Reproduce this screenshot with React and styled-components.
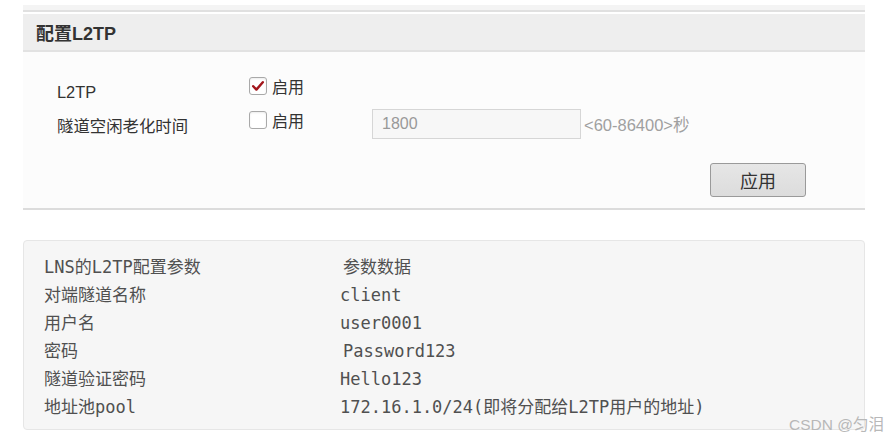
import React from "react";
import styled, { createGlobalStyle } from "styled-components";

const Global = createGlobalStyle`
  html, body { margin: 0; padding: 0; background: #ffffff; }
  body { width: 888px; height: 440px; overflow: hidden; position: relative; }
`;

const Page = styled.div`
  padding: 5px 23px 0 23px;
  font-family: "Liberation Sans", "Noto Sans CJK SC", sans-serif;
  color: #333;
`;

const Panel = styled.section`
  display: flex;
  flex-direction: column;
`;

const TopStrip = styled.div`
  height: 5px;
  background: #f4f4f4;
  border-bottom: 2px solid #e0e0e0;
  margin-bottom: 2px;
`;

const Header = styled.h2`
  margin: 0;
  height: 36px;
  display: flex;
  align-items: center;
  padding-left: 13px;
  background: #eeeeee;
  border-bottom: 2px solid #e2e2e2;
  font-size: 18px;
  font-weight: bold;
  color: #333;
`;

const Body = styled.div`
  background: #fcfcfc;
  padding: 23px 59px 11px 34px;
  border-bottom: 2px solid #dcdcdc;
  display: flex;
  flex-direction: column;
`;

const FormRow = styled.div`
  display: grid;
  grid-template-columns: 192px 123px auto;
  height: 34px;
`;

const Label = styled.div`
  font-size: 16.4px;
  line-height: 34px;
  color: #333;
`;

const CheckGroup = styled.label`
  display: flex;
  align-items: center;
  gap: 5px;
  margin-top: 1px;
  height: 19px;
  align-self: start;
  font-size: 16px;
  color: #333;
`;

const Box = styled.span`
  width: 16px;
  height: 16px;
  border: 1px solid #a9a9a9;
  border-radius: 3px;
  background: #ffffff;
  box-shadow: inset 0 1px 2px rgba(0,0,0,0.08);
  display: flex;
  align-items: center;
  justify-content: center;
`;

const Field = styled.div`
  display: flex;
  align-items: center;
  align-self: start;
  gap: 3px;
`;

const Input = styled.div`
  width: 198px;
  height: 28px;
  border: 1px solid #d6d6d6;
  background: #f7f7f7;
  padding-left: 9px;
  display: flex;
  align-items: center;
  font-size: 16px;
  color: #999;
`;

const Hint = styled.span`
  font-size: 16.5px;
  color: #a0a0a0;
`;

const Actions = styled.div`
  display: flex;
  justify-content: flex-end;
  margin-top: 20px;
`;

const Button = styled.button`
  width: 96px;
  height: 34px;
  border: 1px solid #9a9a9a;
  border-radius: 3px;
  background: linear-gradient(#e6e6e6, #dcdcdc);
  font-family: "Liberation Sans", "Noto Sans CJK SC", sans-serif;
  font-size: 18px;
  color: #333;
  padding: 0;
`;

const InfoBox = styled.div`
  margin-top: 30px;
  background: #f6f6f6;
  border: 1px solid #e6e6e6;
  border-radius: 4px;
  padding: 12px 20px 8px 20px;
  font-family: "DejaVu Sans Mono", "Noto Sans CJK SC", monospace;
  font-size: 17px;
  color: #505050;
`;

const InfoRow = styled.div`
  display: grid;
  grid-template-columns: 296px auto;
  height: 28px;
  line-height: 28px;
  white-space: nowrap;
`;

const Cell = styled.span`
  padding-left: ${(p) => (p.$indent ? 3 : 0)}px;
`;

const Watermark = styled.div`
  position: absolute;
  right: 4px;
  bottom: 6px;
  font-family: "Liberation Sans", "Noto Sans CJK SC", sans-serif;
  font-size: 15.5px;
  color: #b8b8b8;
`;

const Check = ({ checked }) => (
  <Box>
    {checked && (
      <svg width="14" height="14" viewBox="0 0 14 14">
        <path d="M2.2 7.2 L5.4 10.6 L11.8 3.2" fill="none" stroke="#a3161c" strokeWidth="2.4" strokeLinecap="round" strokeLinejoin="round" />
      </svg>
    )}
  </Box>
);

const rows = [
  ["LNS的L2TP配置参数", "参数数据", true],
  ["对端隧道名称", "client"],
  ["用户名", "user0001"],
  ["密码", "Password123", true],
  ["隧道验证密码", "Hello123"],
  ["地址池pool", "172.16.1.0/24(即将分配给L2TP用户的地址)"],
];

export default function App() {
  return (
    <>
      <Global />
      <Page>
        <Panel>
          <TopStrip />
          <Header>配置L2TP</Header>
          <Body>
            <FormRow>
              <Label>L2TP</Label>
              <CheckGroup>
                <Check checked />
                启用
              </CheckGroup>
            </FormRow>
            <FormRow>
              <Label>隧道空闲老化时间</Label>
              <CheckGroup>
                <Check />
                启用
              </CheckGroup>
              <Field>
                <Input>1800</Input>
                <Hint>&lt;60-86400&gt;秒</Hint>
              </Field>
            </FormRow>
            <Actions>
              <Button>应用</Button>
            </Actions>
          </Body>
        </Panel>
        <InfoBox>
          {rows.map(([k, v, indent]) => (
            <InfoRow key={k}>
              <span>{k}</span>
              <Cell $indent={indent}>{v}</Cell>
            </InfoRow>
          ))}
        </InfoBox>
      </Page>
      <Watermark>CSDN @匀泪</Watermark>
    </>
  );
}
